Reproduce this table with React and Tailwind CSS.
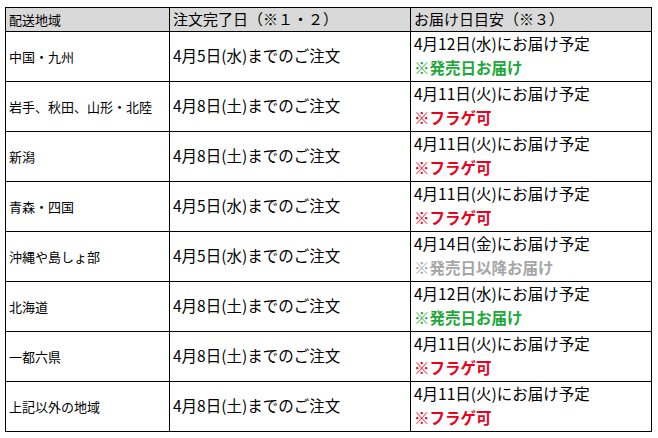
const rows = [
  { area: '中国・九州', order: '4月5日(水)までのご注文', date: '4月12日(水)にお届け予定', note: '※発売日お届け', tone: 'green' },
  { area: '岩手、秋田、山形・北陸', order: '4月8日(土)までのご注文', date: '4月11日(火)にお届け予定', note: '※フラゲ可', tone: 'red' },
  { area: '新潟', order: '4月8日(土)までのご注文', date: '4月11日(火)にお届け予定', note: '※フラゲ可', tone: 'red' },
  { area: '青森・四国', order: '4月5日(水)までのご注文', date: '4月11日(火)にお届け予定', note: '※フラゲ可', tone: 'red' },
  { area: '沖縄や島しょ部', order: '4月5日(水)までのご注文', date: '4月14日(金)にお届け予定', note: '※発売日以降お届け', tone: 'gray' },
  { area: '北海道', order: '4月8日(土)までのご注文', date: '4月12日(水)にお届け予定', note: '※発売日お届け', tone: 'green' },
  { area: '一都六県', order: '4月8日(土)までのご注文', date: '4月11日(火)にお届け予定', note: '※フラゲ可', tone: 'red' },
  { area: '上記以外の地域', order: '4月8日(土)までのご注文', date: '4月11日(火)にお届け予定', note: '※フラゲ可', tone: 'red' },
];

const noteColor = {
  green: 'text-[#1ea83a]',
  red: 'text-[#e8001c]',
  gray: 'text-[#a6a6a6]',
};

const cell = 'border-r border-b border-black pl-[3px] flex items-center';

export default function App() {
  return (
    <div className="w-[658px] h-[438px] bg-white pt-[7px] pl-[5px] text-black font-['Meiryo','Noto_Sans_CJK_JP',sans-serif]">
      <div className="grid grid-cols-[164px_241px_241px] w-[647px] border-l border-t border-black">
        {/* header */}
        <div className={`${cell} h-[24px] bg-[#d9d9d9] text-[13px]`}>配送地域</div>
        <div className={`${cell} h-[24px] bg-[#d9d9d9] text-[15px]`}>注文完了日（※１・２）</div>
        <div className={`${cell} h-[24px] bg-[#d9d9d9] text-[15px]`}>お届け日目安（※３）</div>

        {rows.map((r, i) => (
          <div key={i} className="contents">
            <div className={`${cell} h-[50px] text-[13px]`}>{r.area}</div>
            <div className={`${cell} h-[50px] text-[15.5px] pb-[1px]`}>{r.order}</div>
            <div className={`${cell} h-[50px] flex-col !items-start justify-center text-[15.5px] leading-[24px] pb-[3px]`}>
              <span>{r.date}</span>
              <span className={`font-bold ${noteColor[r.tone]}`}>{r.note}</span>
            </div>
          </div>
        ))}
      </div>
    </div>
  );
}
